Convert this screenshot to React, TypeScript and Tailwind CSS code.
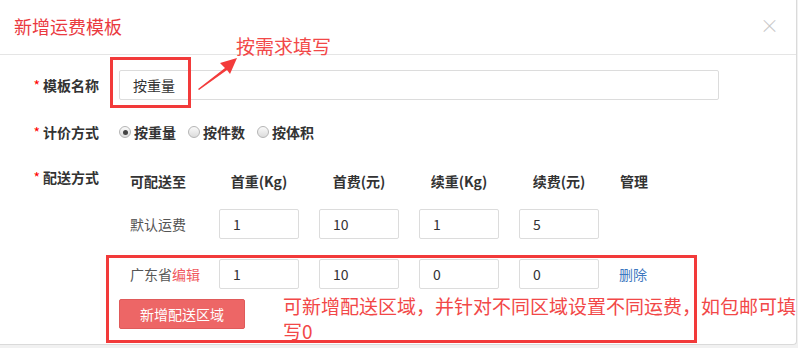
const FONT = "font-['Noto_Sans_CJK_SC','Noto_Sans',sans-serif]";

function Label({ text }: { text: string }) {
  return (
    <div className="flex w-[99px] shrink-0 items-center justify-end gap-[3px] text-[14px] font-bold leading-[20px] text-[#333]">
      <span className="text-[14px] font-normal text-[#f00]">*</span>
      {text}
    </div>
  );
}

function Radio({ label, checked }: { label: string; checked?: boolean }) {
  return (
    <span className="flex items-center gap-[3px] text-[14px] font-bold text-[#333]">
      <span className="flex h-[12px] w-[12px] items-center justify-center rounded-full border border-[#b5b5b5] bg-gradient-to-b from-[#fafafa] to-[#dcdcdc]">
        {checked && <span className="h-[5px] w-[5px] rounded-full bg-[#444]" />}
      </span>
      {label}
    </span>
  );
}

function Cell({ value }: { value: string }) {
  return (
    <div className="flex h-[30px] w-[80px] items-center rounded-[2px] border border-[#dcdcdc] bg-white pl-[13px] text-[14px] text-[#333]">
      {value}
    </div>
  );
}

const HEADERS = ["首重(Kg)", "首费(元)", "续重(Kg)", "续费(元)"];

export default function App() {
  return (
    <div className={`relative h-[348px] w-[798px] overflow-hidden bg-[#f1f1f1] ${FONT}`}>
      <div className="h-[345px] w-[797px] rounded-br-[4px] border-r border-b border-[#dadada] bg-white">
        {/* header */}
        <div className="flex h-[55px] items-center justify-between border-b border-[#e5e5e5] pr-[17px] pl-[14px]">
          <h2 className="pb-[2px] text-[18px] leading-[24px] text-[#ea3a3f]">新增运费模板</h2>
          <span className="mb-[6px] text-[19px] leading-none font-light text-[#c8c8c8]">×</span>
        </div>

        {/* body */}
        <div className="pt-[15px]">
          <div className="flex items-center">
            <Label text="模板名称" />
            <div className="ml-[20px] flex h-[30px] w-[600px] items-center rounded-[2px] border border-[#dcdcdc] pl-[13px] text-[14px] text-[#333]">
              按重量
            </div>
          </div>

          <div className="mt-[22px] flex h-[20px] items-center">
            <Label text="计价方式" />
            <div className="ml-[20px] flex items-center gap-[12px]">
              <Radio label="按重量" checked />
              <Radio label="按件数" />
              <Radio label="按体积" />
            </div>
          </div>

          <div className="mt-[25px] flex items-start">
            <Label text="配送方式" />
            <div className="ml-[20px] grid grid-cols-[80px_80px_80px_80px_80px_auto] gap-x-[20px]">
              <div className="pt-[4px] pl-[11px] text-[14px] leading-[20px] font-bold text-[#333]">可配送至</div>
              {HEADERS.map((h) => (
                <div key={h} className="pt-[4px] text-center text-[14px] leading-[20px] font-bold text-[#333]">
                  {h}
                </div>
              ))}
              <div className="pt-[4px] pl-[1px] text-[14px] leading-[20px] font-bold text-[#333]">管理</div>

              <div className="mt-[18px] flex items-center pl-[11px] text-[14px] whitespace-nowrap text-[#555]">默认运费</div>
              <div className="mt-[18px]"><Cell value="1" /></div>
              <div className="mt-[18px]"><Cell value="10" /></div>
              <div className="mt-[18px]"><Cell value="1" /></div>
              <div className="mt-[18px]"><Cell value="5" /></div>
              <div className="mt-[18px]" />

              <div className="mt-[20px] flex items-center pl-[11px] text-[14px] whitespace-nowrap text-[#555]">
                广东省<span className="text-[#f0585e]">编辑</span>
              </div>
              <div className="mt-[20px]"><Cell value="1" /></div>
              <div className="mt-[20px]"><Cell value="10" /></div>
              <div className="mt-[20px]"><Cell value="0" /></div>
              <div className="mt-[20px]"><Cell value="0" /></div>
              <div className="mt-[20px] flex items-center text-[14px] text-[#3d78c0]">删除</div>
            </div>
          </div>

          <div className="mt-[10px] ml-[119px]">
            <button className="h-[30px] w-[126px] rounded-[2px] border border-[#e05a5a] bg-[#ed6666] text-[14px] text-white">
              新增配送区域
            </button>
          </div>
        </div>
      </div>

      {/* annotations */}
      <div className="absolute top-[57px] left-[110px] h-[51px] w-[81px] border-[3px] border-[#f23a3a]" />
      <svg className="absolute top-[54px] left-[194px]" width="48" height="40" viewBox="0 0 48 40">
        <polygon points="4,35 31,14 26,9 43,4 36,20 33,16 5,36" fill="#f33b3b" />
      </svg>
      <div className="absolute top-[34px] left-[236px] text-[19px] leading-[24px] text-[#f24848]">按需求填写</div>

      <div className="absolute top-[255px] left-[106px] h-[88px] w-[591px] border-[3px] border-[#f23a3a]" />
      <div className="absolute top-[293px] left-[283px] text-[19px] leading-[25px] whitespace-nowrap text-[#f24848]">
        可新增配送区域，并针对不同区域设置不同运费，如包邮可填
        <br />
        写0
      </div>
    </div>
  );
}
